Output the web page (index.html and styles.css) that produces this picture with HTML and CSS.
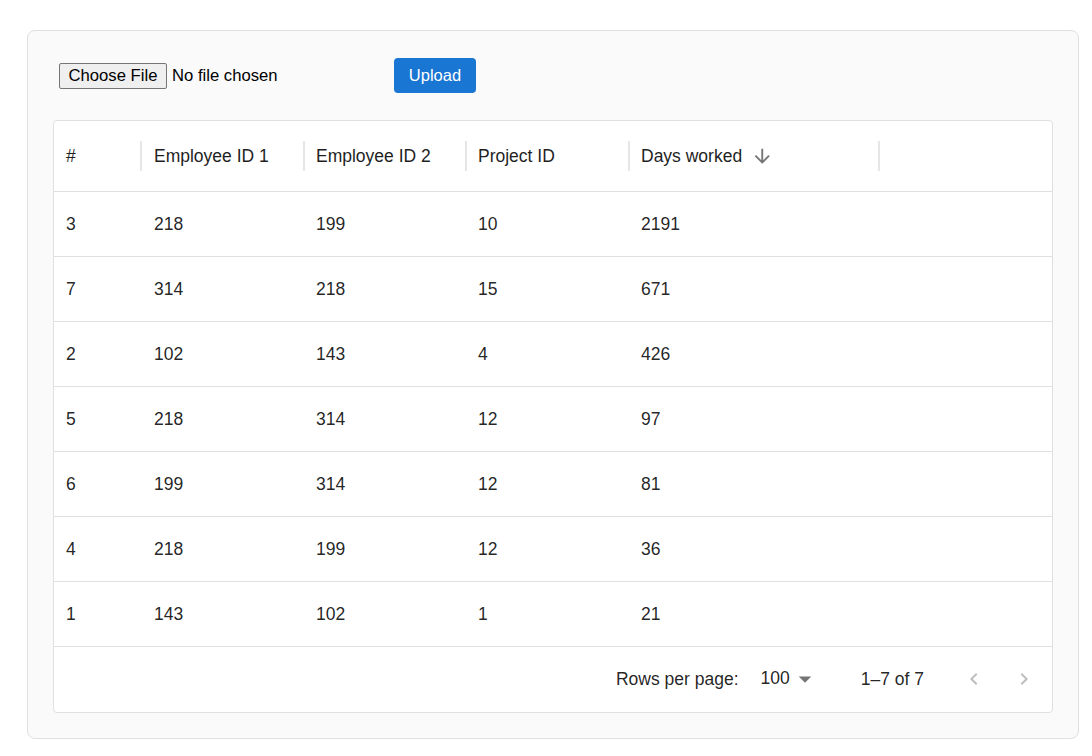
FILE: index.html
```html
<!DOCTYPE html>
<html>
<head>
<meta charset="utf-8">
<link rel="stylesheet" href="styles.css">
</head>
<body>
<div class="card">
  <div class="toolbar">
    <input class="file" type="file">
    <button class="upload">Upload</button>
  </div>
  <div class="grid">
    <div class="row head">
      <div class="cell c1">#<span class="sep"></span></div>
      <div class="cell c2">Employee ID 1<span class="sep"></span></div>
      <div class="cell c3">Employee ID 2<span class="sep"></span></div>
      <div class="cell c4">Project ID<span class="sep"></span></div>
      <div class="cell c5">Days worked
        <svg class="sort" viewBox="0 0 24 24"><path d="M20 12l-1.41-1.41L13 16.17V4h-2v12.17l-5.58-5.59L4 12l8 8 8-8z"/></svg>
        <span class="sep"></span></div>
      <div class="cell fill"></div>
    </div>
    <div class="row"><div class="cell c1">3</div><div class="cell c2">218</div><div class="cell c3">199</div><div class="cell c4">10</div><div class="cell c5">2191</div><div class="cell fill"></div></div>
    <div class="row"><div class="cell c1">7</div><div class="cell c2">314</div><div class="cell c3">218</div><div class="cell c4">15</div><div class="cell c5">671</div><div class="cell fill"></div></div>
    <div class="row"><div class="cell c1">2</div><div class="cell c2">102</div><div class="cell c3">143</div><div class="cell c4">4</div><div class="cell c5">426</div><div class="cell fill"></div></div>
    <div class="row"><div class="cell c1">5</div><div class="cell c2">218</div><div class="cell c3">314</div><div class="cell c4">12</div><div class="cell c5">97</div><div class="cell fill"></div></div>
    <div class="row"><div class="cell c1">6</div><div class="cell c2">199</div><div class="cell c3">314</div><div class="cell c4">12</div><div class="cell c5">81</div><div class="cell fill"></div></div>
    <div class="row"><div class="cell c1">4</div><div class="cell c2">218</div><div class="cell c3">199</div><div class="cell c4">12</div><div class="cell c5">36</div><div class="cell fill"></div></div>
    <div class="row"><div class="cell c1">1</div><div class="cell c2">143</div><div class="cell c3">102</div><div class="cell c4">1</div><div class="cell c5">21</div><div class="cell fill"></div></div>
    <div class="footer">
      <span class="label">Rows per page:</span>
      <span class="select">100<svg class="drop" viewBox="0 0 24 24"><path d="M7 10l5 5 5-5z"/></svg></span>
      <span class="shown">1–7 of 7</span>
      <span class="actions">
        <span class="iconbtn"><svg viewBox="0 0 24 24"><path d="M15.41 7.41 14 6l-6 6 6 6 1.41-1.41L10.83 12z"/></svg></span>
        <span class="iconbtn"><svg viewBox="0 0 24 24"><path d="M10 6 8.59 7.41 13.17 12l-4.58 4.59L10 18l6-6z"/></svg></span>
      </span>
    </div>
  </div>
</div>
</body>
</html>
```
FILE: styles.css
```css
html, body {
  margin: 0;
  padding: 0;
  background: #ffffff;
  font-family: "Liberation Sans", Arial, sans-serif;
  color: rgba(0, 0, 0, 0.87);
}

.card {
  box-sizing: border-box;
  margin: 30px 0 0 27px;
  width: 1052px;
  height: 709px;
  padding: 27px 25px 25px 25px;
  background: #fafafa;
  border: 1px solid #e0e0e0;
  border-radius: 8px;
}

.toolbar {
  display: flex;
  align-items: center;
  height: 35px;
  margin-bottom: 27px;
}

.file {
  width: 335px;
  margin: 0 0 0 6px;
  font-family: "Liberation Sans", Arial, sans-serif;
  font-size: 16.67px;
  color: #000;
}

.file::file-selector-button {
  box-sizing: border-box;
  height: 26px;
  width: 108px;
  padding: 0;
  margin-right: 5px;
  font-family: "Liberation Sans", Arial, sans-serif;
  font-size: 16.67px;
  color: #000;
  background: #efefef;
  border: 1px solid #767676;
  border-radius: 2px;
}

.upload {
  box-sizing: border-box;
  height: 35px;
  width: 82px;
  padding: 0;
  font-family: "Liberation Sans", Arial, sans-serif;
  font-size: 16.5px;
  color: #fff;
  background: #1976d2;
  border: none;
  border-radius: 4px;
}

.grid {
  background: #fff;
  border: 1px solid #e0e0e0;
  border-radius: 4px;
  font-size: 17.5px;
}

.row {
  display: flex;
  height: 64px;
  border-bottom: 1px solid #e0e0e0;
}

.row.head {
  height: 69.6px;
}

.cell {
  position: relative;
  box-sizing: border-box;
  display: flex;
  align-items: center;
  padding: 1px 12px 0 12px;
}

.c1 { width: 87px; }
.c2 { width: 163px; padding-left: 13px; }
.c3 { width: 162px; padding-left: 12px; }
.c4 { width: 163px; padding-left: 12px; }
.c5 { width: 250px; padding-left: 12px; }
.fill { flex: 1; }

.head .cell {
  color: #1f1f1f;
}

.sep {
  position: absolute;
  right: -1px;
  top: 20px;
  width: 2px;
  height: 30px;
  background: #e6e6e6;
}

.sort {
  width: 22.5px;
  height: 22.5px;
  margin-left: 9px;
  fill: #757575;
}

.footer {
  display: flex;
  align-items: center;
  justify-content: flex-end;
  height: 65px;
  padding-right: 8px;
}

.label {
  margin-right: 22px;
}

.select {
  display: flex;
  align-items: center;
  margin-top: -2px;
  margin-right: 41px;
}

.drop {
  width: 30px;
  height: 30px;
  margin-top: 2px;
  fill: #757575;
}

.shown {
  margin-right: 30px;
}

.actions {
  display: flex;
  gap: 10px;
}

.iconbtn {
  display: flex;
  align-items: center;
  justify-content: center;
  width: 40px;
  height: 40px;
}

.iconbtn svg {
  width: 24px;
  height: 24px;
  fill: rgba(0, 0, 0, 0.26);
}
```
